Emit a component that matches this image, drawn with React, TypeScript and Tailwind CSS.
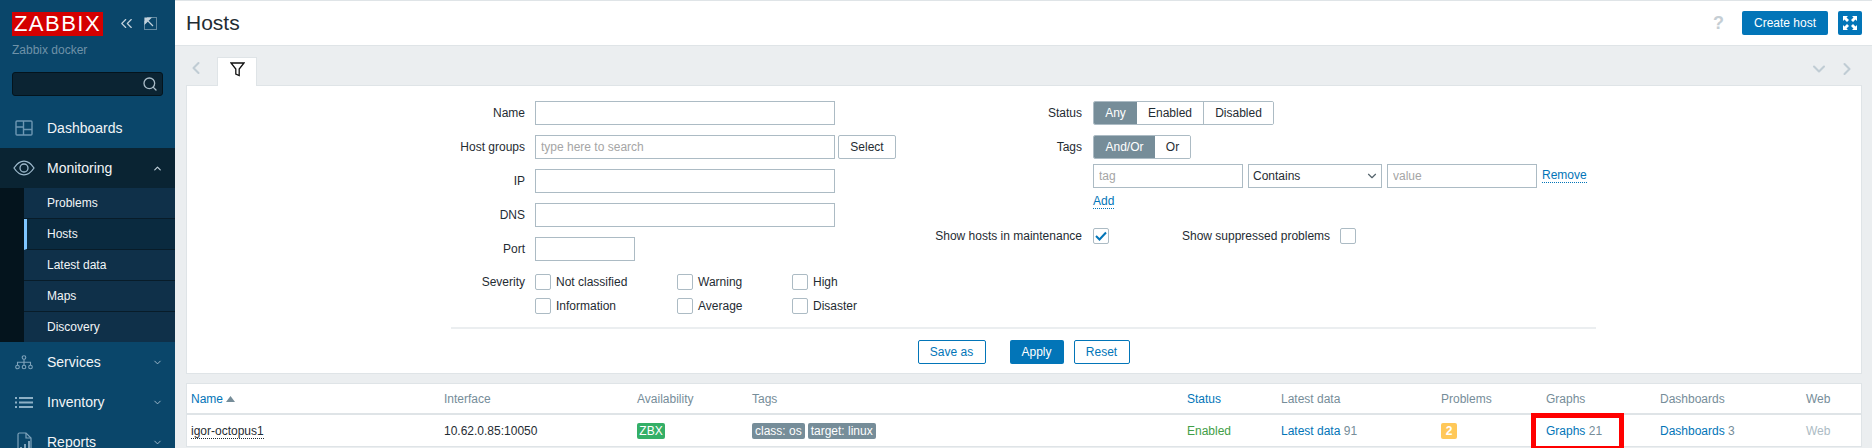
import { ChevronDown, ChevronLeft, ChevronRight, ChevronUp, ChevronsLeft, Search } from 'lucide-react';

const font = '[font-family:"Liberation_Sans",Arial,sans-serif]';

function DashboardsIcon() {
  return (
    <svg width="18" height="16" viewBox="0 0 18 16" fill="none" stroke="#6d97b3" strokeWidth="1.4">
      <rect x="1" y="1" width="16" height="14" rx="1" />
      <path d="M8.5 1v14M1 7h7.5M8.5 9.5H17" />
    </svg>
  );
}

function EyeIcon() {
  return (
    <svg width="22" height="16" viewBox="0 0 22 16" fill="none" stroke="#9db9cc" strokeWidth="1.3">
      <path d="M1 8c3-4.6 6.4-6.8 10-6.8S18 3.400 21 8c-3 4.600-6.400 6.800-10 6.800S4 12.600 1 8z" />
      <circle cx="11" cy="8" r="4" />
    </svg>
  );
}

function ServicesIcon() {
  return (
    <svg width="18" height="15" viewBox="0 0 18 15" fill="none" stroke="#7ea3bb" strokeWidth="1.1">
      <circle cx="9" cy="2.500" r="1.800" />
      <path d="M9 4.300v3M2.500 10V7.300h13V10M9 7.300V10" />
      <circle cx="2.500" cy="12" r="1.800" />
      <circle cx="9" cy="12" r="1.800" />
      <circle cx="15.500" cy="12" r="1.800" />
    </svg>
  );
}

function InventoryIcon() {
  return (
    <svg width="18" height="11" viewBox="0 0 18 11" fill="#8db0c6">
      <rect x="0" y="0" width="2" height="2" />
      <rect x="4" y="0" width="14" height="2" />
      <rect x="0" y="4.500" width="2" height="2" />
      <rect x="4" y="4.500" width="14" height="2" />
      <rect x="0" y="9" width="2" height="2" />
      <rect x="4" y="9" width="14" height="2" />
    </svg>
  );
}

function ReportsIcon() {
  return (
    <svg width="15" height="20" viewBox="0 0 15 20" fill="none" stroke="#7ea3bb" strokeWidth="1.2">
      <path d="M1 18V2.500C1 1.500 1.500 1 2.500 1H9l5 5v12" />
      <path d="M9 1v5h5" />
      <path d="M3 18v-3h2v3zM7 18v-6h2v6zM11 18V9h2v9z" fill="#7ea3bb" stroke="none" />
    </svg>
  );
}

function CollapseIcon() {
  return (
    <svg width="13" height="13" viewBox="0 0 13 13" fill="none" stroke="#c3d2dc">
      <path d="M3.500.5H12.500V12.500H.5V3.500" strokeDasharray="1 1" />
      <path d="M1 1h5.500L1 6.500zM4 4l5 5" fill="#c3d2dc" strokeWidth="1.200" />
    </svg>
  );
}

function FunnelIcon() {
  return (
    <svg width="15" height="15" viewBox="0 0 15 15" fill="none" stroke="#111" strokeWidth="1.300">
      <path d="M1 1h13L9.200 7v6.500l-3.400-1.500V7z" />
    </svg>
  );
}

function FullscreenIcon() {
  return (
    <svg width="16" height="16" viewBox="0 0 16 16" fill="#fff">
      <path d="M1 1h5L4.500 2.500 7 5 5 7 2.500 4.500 1 6zM15 1v5l-1.500-1.500L11 7 9 5l2.500-2.500L10 1zM1 15v-5l1.500 1.500L5 9l2 2-2.500 2.500L6 15zM15 15h-5l1.500-1.500L9 11l2-2 2.500 2.500L15 10z" />
    </svg>
  );
}

function MenuRow({ label, icon, chevron, active }: { label: string; icon: React.ReactNode; chevron?: 'up' | 'down'; active?: boolean }) {
  return (
    <div className={`flex h-[40px] shrink-0 items-center text-[14px] text-[#f2f5f7] ${active ? 'bg-[#0a2433]' : ''}`}>
      <div className="flex w-[47px] justify-center pl-[1px]">{icon}</div>
      <span className="flex-1">{label}</span>
      {chevron === 'up' && <ChevronUp size={11} strokeWidth={2.500} className="mr-[12px] text-[#c3d2dc]" />}
      {chevron === 'down' && <ChevronDown size={11} strokeWidth={2} className="mr-[12px] text-[#a9c0cf]" />}
    </div>
  );
}

function SubItem({ label, active }: { label: string; active?: boolean }) {
  return (
    <div className={`flex h-[31px] items-center border-b border-[#081c29] text-[12px] text-[#f2f5f7] ${active ? 'border-l-[3px] border-l-[#7fc6ff] bg-[#0a2a3f] pl-[20px]' : 'bg-[#0f3049] pl-[23px]'}`}>
      {label}
    </div>
  );
}

function Sidebar() {
  return (
    <aside className="flex h-full w-[175px] shrink-0 flex-col overflow-hidden bg-[#0a466a]">
      <div className="flex h-[42px] shrink-0 items-end gap-[14px] pb-[6px] pl-[12px]">
        <div className="flex h-[24px] w-[91px] items-center justify-center bg-[#d40000] text-[22px] leading-none tracking-[1.500px] text-white">ZABBIX</div>
        <div className="flex items-center gap-[8px] pb-[3px]">
          <ChevronsLeft size={19} strokeWidth={1.500} className="text-[#c3d2dc]" />
          <CollapseIcon />
        </div>
      </div>
      <div className="h-[30px] shrink-0 pl-[12px] text-[12px] leading-[16px] text-[#6f92a8]">Zabbix docker</div>
      <div className="mx-[12px] flex h-[24px] shrink-0 items-center justify-end rounded-[3px] border border-[#04141d] bg-[#0b2433] pr-[4px]">
        <Search size={16} className="text-[#a9bcc8]" />
      </div>
      <div className="h-[12px] shrink-0" />
      <MenuRow label="Dashboards" icon={<DashboardsIcon />} />
      <MenuRow label="Monitoring" icon={<EyeIcon />} chevron="up" active />
      <div className="flex h-[154px] shrink-0 overflow-hidden bg-[#04141d]">
        <div className="w-[24px]" />
        <div className="flex-1">
          <SubItem label="Problems" />
          <SubItem label="Hosts" active />
          <SubItem label="Latest data" />
          <SubItem label="Maps" />
          <SubItem label="Discovery" />
        </div>
      </div>
      <MenuRow label="Services" icon={<ServicesIcon />} chevron="down" />
      <MenuRow label="Inventory" icon={<InventoryIcon />} chevron="down" />
      <MenuRow label="Reports" icon={<ReportsIcon />} chevron="down" />
    </aside>
  );
}

function Field({ label, children }: { label: string; children: React.ReactNode }) {
  return (
    <div className="flex h-[24px] items-center">
      <label className="w-[74px] shrink-0 whitespace-nowrap text-right">{label}</label>
      <div className="ml-[10px] flex items-center gap-[3px]">{children}</div>
    </div>
  );
}

function TextInput({ className, placeholder }: { className: string; placeholder?: string }) {
  return (
    <input
      placeholder={placeholder}
      className={`h-[24px] border border-[#acbbc4] bg-white px-[5px] outline-none placeholder:text-[#a5a5a5] ${className}`}
    />
  );
}

function Check({ checked }: { checked?: boolean }) {
  return (
    <span className="flex h-[16px] w-[16px] shrink-0 items-center justify-center rounded-[2px] border border-[#acbbc4] bg-white">
      {checked && (
        <svg width="12" height="10" viewBox="0 0 12 10" fill="none" stroke="#0275b8" strokeWidth="2">
          <path d="M1 5l3.500 3.500L11 1.500" />
        </svg>
      )}
    </span>
  );
}

function Severity({ label, width }: { label: string; width: string }) {
  return (
    <div className={`flex items-center gap-[5px] ${width}`}>
      <Check />
      <span>{label}</span>
    </div>
  );
}

function Segment({ items, widths }: { items: string[]; widths: string[] }) {
  return (
    <div className="flex h-[24px] overflow-hidden rounded-[2px] border border-[#acbbc4]">
      {items.map((item, i) => (
        <div
          key={item}
          className={`flex items-center justify-center ${widths[i]} ${i === 0 ? 'bg-[#768d99] text-white' : 'bg-white'} ${i > 1 ? 'border-l border-[#acbbc4]' : ''}`}
        >
          {item}
        </div>
      ))}
    </div>
  );
}

function FilterPanel() {
  return (
    <section className="border border-[#dfe4e7] bg-white text-[#1f2c33]">
      <div className="ml-[264px] w-[1145px]">
        <div className="flex h-[243px] border-b-2 border-[#ebeef0] pt-[15px]">
          <div className="flex w-[482px] shrink-0 flex-col gap-[10px]">
            <Field label="Name">
              <TextInput className="w-[300px]" />
            </Field>
            <Field label="Host groups">
              <TextInput className="w-[300px]" placeholder="type here to search" />
              <button className="h-[24px] w-[58px] rounded-[2px] border border-[#acbbc4] bg-white">Select</button>
            </Field>
            <Field label="IP">
              <TextInput className="w-[300px]" />
            </Field>
            <Field label="DNS">
              <TextInput className="w-[300px]" />
            </Field>
            <Field label="Port">
              <TextInput className="w-[100px]" />
            </Field>
            <div className="mt-[3px] flex">
              <label className="w-[74px] shrink-0 text-right leading-[16px]">Severity</label>
              <div className="ml-[10px] flex flex-col gap-[8px]">
                <div className="flex leading-[16px]">
                  <Severity label="Not classified" width="w-[142px]" />
                  <Severity label="Warning" width="w-[115px]" />
                  <Severity label="High" width="w-[80px]" />
                </div>
                <div className="flex leading-[16px]">
                  <Severity label="Information" width="w-[142px]" />
                  <Severity label="Average" width="w-[115px]" />
                  <Severity label="Disaster" width="w-[80px]" />
                </div>
              </div>
            </div>
          </div>
          <div className="flex flex-1 flex-col">
            <div className="flex h-[24px] items-center">
              <label className="w-[149px] text-right">Status</label>
              <div className="ml-[11px]">
                <Segment items={['Any', 'Enabled', 'Disabled']} widths={['w-[43px]', 'w-[66px]', 'w-[70px]']} />
              </div>
            </div>
            <div className="mt-[10px] flex h-[24px] items-center">
              <label className="w-[149px] text-right">Tags</label>
              <div className="ml-[11px]">
                <Segment items={['And/Or', 'Or']} widths={['w-[61px]', 'w-[35px]']} />
              </div>
            </div>
            <div className="mt-[5px] ml-[160px] flex items-center gap-[5px]">
              <TextInput className="w-[150px]" placeholder="tag" />
              <div className="flex h-[24px] w-[134px] items-center justify-between border border-[#acbbc4] pr-[2px] pl-[4px]">
                <span>Contains</span>
                <ChevronDown size={14} className="text-[#55646d]" />
              </div>
              <TextInput className="w-[150px]" placeholder="value" />
              <a className="border-b border-dotted border-[#0275b8] leading-[13px] text-[#0275b8]">Remove</a>
            </div>
            <div className="mt-[5px] ml-[160px] flex h-[18px] items-center">
              <a className="border-b border-dotted border-[#0275b8] leading-[13px] text-[#0275b8]">Add</a>
            </div>
            <div className="mt-[17px] flex h-[16px] items-center">
              <label className="w-[149px] text-right whitespace-nowrap">Show hosts in maintenance</label>
              <div className="ml-[11px]">
                <Check checked />
              </div>
              <label className="ml-[73px] whitespace-nowrap">Show suppressed problems</label>
              <div className="ml-[10px]">
                <Check />
              </div>
            </div>
          </div>
        </div>
        <div className="flex h-[44px] justify-center pt-[11px]">
          <button className="h-[24px] w-[68px] rounded-[2px] border border-[#0275b8] bg-white text-[#0275b8]">Save as</button>
          <button className="ml-[24px] h-[24px] w-[54px] rounded-[2px] bg-[#0275b8] text-white">Apply</button>
          <button className="ml-[10px] h-[24px] w-[56px] rounded-[2px] border border-[#0275b8] bg-white text-[#0275b8]">Reset</button>
        </div>
      </div>
    </section>
  );
}

function Badge({ children, className }: { children: React.ReactNode; className: string }) {
  return <span className={`flex h-[16px] items-center rounded-[2px] px-[3px] text-white ${className}`}>{children}</span>;
}

function HostsTable() {
  const cols = 'grid grid-cols-[253px_193px_115px_435px_94px_160px_105px_114px_146px_1fr] items-center pl-[4px]';
  return (
    <section className="relative mt-[9px] border-x border-t border-[#dfe4e7] bg-white">
      <div className={`${cols} h-[31px] border-b-2 border-[#dfe4e7] text-[#768d99]`}>
        <span className="flex items-center gap-[3px] text-[#0275b8]">
          Name
          <svg width="9" height="6" viewBox="0 0 9 6" fill="#768d99"><path d="M4.500 0 9 6H0z" /></svg>
        </span>
        <span>Interface</span>
        <span>Availability</span>
        <span>Tags</span>
        <span className="text-[#0275b8]">Status</span>
        <span>Latest data</span>
        <span>Problems</span>
        <span>Graphs</span>
        <span>Dashboards</span>
        <span>Web</span>
      </div>
      <div className={`${cols} h-[32px] border-b border-[#dfe4e7] text-[#1f2c33]`}>
        <span><span className="border-b border-dotted border-[#1f2c33] leading-[13px]">igor-octopus1</span></span>
        <span>10.62.0.85:10050</span>
        <span className="flex"><Badge className="w-[28px] justify-center bg-[#34af67]">ZBX</Badge></span>
        <span className="flex gap-[3px]">
          <Badge className="bg-[#768d99]">class: os</Badge>
          <Badge className="bg-[#768d99]">target: linux</Badge>
        </span>
        <span className="text-[#429e47]">Enabled</span>
        <span><span className="text-[#0275b8]">Latest data</span> <span className="text-[#768d99]">91</span></span>
        <span className="flex"><Badge className="w-[16px] justify-center bg-[#ffc859] font-bold">2</Badge></span>
        <span><span className="text-[#0275b8]">Graphs</span> <span className="text-[#768d99]">21</span></span>
        <span><span className="text-[#0275b8]">Dashboards</span> <span className="text-[#768d99]">3</span></span>
        <span className="text-[#acbbc4]">Web</span>
      </div>
      {/* annotation drawn over the Graphs cell */}
      <div className="absolute top-[29px] left-[1344px] h-[38px] w-[93px] border-[5px] border-[#f00]" />
    </section>
  );
}

export default function App() {
  return (
    <div className={`flex h-[448px] w-[1872px] overflow-hidden bg-[#ebeef0] text-[12px] ${font}`}>
      <Sidebar />
      <main className="flex-1">
        <header className="flex h-[46px] items-center border-y border-t-[#dfe4e7] border-b-[#dfe4e7] bg-white pr-[10px] pl-[11px]">
          <h1 className="flex-1 text-[21px] text-[#1f2c33]">Hosts</h1>
          <span className="mr-[18px] text-[18px] font-bold text-[#c5ced4]">?</span>
          <button className="h-[24px] w-[86px] rounded-[2px] bg-[#0275b8] text-white">Create host</button>
          <button className="ml-[10px] flex h-[24px] w-[24px] items-center justify-center rounded-[2px] bg-[#0275b8]">
            <FullscreenIcon />
          </button>
        </header>
        <div className="pr-[10px] pl-[11px]">
          <div className="flex h-[39px] items-end">
            <div className="flex h-[29px] w-[31px] items-center justify-start pb-[5px]">
              <ChevronLeft size={20} strokeWidth={2.500} className="text-[#c0ccd4]" />
            </div>
            <div className="relative z-10 -mb-px flex h-[29px] w-[40px] items-center justify-center border-x border-t border-[#dfe4e7] bg-white pb-[5px]">
              <FunnelIcon />
            </div>
            <div className="ml-auto flex h-[29px] items-center gap-[8px] pr-[5px] pb-[4px]">
              <ChevronDown size={20} strokeWidth={2.500} className="text-[#c0ccd4]" />
              <ChevronRight size={20} strokeWidth={2.500} className="text-[#c0ccd4]" />
            </div>
          </div>
          <FilterPanel />
          <HostsTable />
        </div>
      </main>
    </div>
  );
}
